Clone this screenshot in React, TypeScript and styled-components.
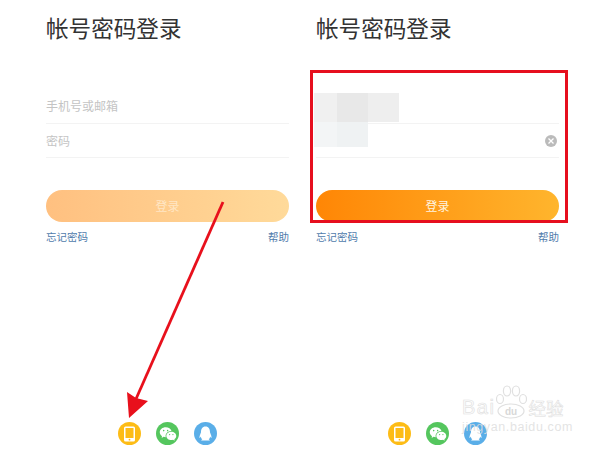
import React from 'react';
import styled, { createGlobalStyle } from 'styled-components';
import { RiQqFill, RiWechatFill } from 'react-icons/ri';

const GlobalStyle = createGlobalStyle`
  html, body {
    margin: 0;
    padding: 0;
    background: #fff;
  }
  body {
    font-family: "Noto Sans CJK SC", "Liberation Sans", sans-serif;
    overflow: hidden;
  }
`;

const Page = styled.div`
  position: relative;
  display: flex;
  gap: 27px;
  width: 600px;
  height: 450px;
  padding-left: 46px;
  box-sizing: border-box;
  overflow: hidden;
`;

const Panel = styled.section`
  display: flex;
  flex-direction: column;
  width: 243px;
  height: 100%;
`;

const Title = styled.h1`
  margin: 14px 0 0;
  font-size: 22.6px;
  line-height: 28px;
  font-weight: 400;
  color: #333;
`;

const Form = styled.div`
  margin-top: 47px;
`;

const Field = styled.div`
  display: flex;
  align-items: center;
  justify-content: space-between;
  height: 34px;
  border-bottom: 1px solid #f3f3f3;
  box-sizing: border-box;
  &:first-child {
    height: 35px;
    padding-bottom: 1px;
  }
`;

const Placeholder = styled.span`
  font-size: 12px;
  color: #c4c4c4;
`;

const Mosaic = styled.div<{ $top: number }>`
  display: flex;
  align-self: flex-start;
  margin: ${(p) => p.$top}px 0 0 -2px;
`;

const Tile = styled.div<{ $w: number; $h: number; $c: string }>`
  width: ${(p) => p.$w}px;
  height: ${(p) => p.$h}px;
  background: ${(p) => p.$c};
`;

const Clear = styled.span`
  display: flex;
  align-items: center;
  justify-content: center;
  width: 12px;
  height: 12px;
  margin-right: 2px;
  border-radius: 50%;
  background: #bbb;
`;

const Submit = styled.div<{ $active?: boolean }>`
  display: flex;
  align-items: center;
  justify-content: center;
  height: 32px;
  margin-top: 32px;
  padding-bottom: 2px;
  box-sizing: border-box;
  border-radius: 16px;
  font-size: 12px;
  color: ${(p) => (p.$active ? '#fff3df' : '#ffe6c4')};
  background: ${(p) =>
    p.$active
      ? 'linear-gradient(90deg, #ff8605, #ffb52d)'
      : 'linear-gradient(90deg, #ffc080, #ffda9a)'};
`;

const Links = styled.div`
  display: flex;
  justify-content: space-between;
  margin-top: 7px;
  font-size: 10.5px;
  line-height: 15px;
  color: #4f7bab;
`;

const Socials = styled.div`
  display: flex;
  justify-content: center;
  gap: 15px;
  margin-top: auto;
  margin-bottom: 5px;
`;

const Social = styled.div<{ $c: string }>`
  display: flex;
  align-items: center;
  justify-content: center;
  width: 23px;
  height: 23px;
  border-radius: 50%;
  color: #fff;
  background: ${(p) => p.$c};
`;

const Highlight = styled.div`
  position: absolute;
  left: 310px;
  top: 70px;
  width: 258px;
  height: 153px;
  border: 3px solid #e60f1e;
  box-sizing: border-box;
`;

const ArrowLayer = styled.svg`
  position: absolute;
  left: 0;
  top: 0;
`;

const Watermark = styled.div`
  position: absolute;
  left: 462px;
  top: 384px;
  width: 106px;
  pointer-events: none;
`;

const MarkRow = styled.div`
  display: flex;
  align-items: flex-end;
  height: 35px;
`;

const MarkBrand = styled.span`
  font-family: "Liberation Sans", sans-serif;
  font-size: 20px;
  line-height: 23px;
  letter-spacing: 1.5px;
  color: rgba(255, 255, 255, 0.6);
  -webkit-text-stroke: 0.7px #e2e2e2;
`;

const MarkName = styled.span`
  margin-left: 1px;
  font-size: 17.5px;
  line-height: 23px;
  color: rgba(255, 255, 255, 0.6);
  -webkit-text-stroke: 0.5px #dcdcdc;
`;

const MarkUrl = styled.div`
  margin-top: 1px;
  font-family: "Liberation Sans", sans-serif;
  font-size: 12.5px;
  line-height: 15px;
  letter-spacing: 0.6px;
  color: rgba(222, 222, 222, 0.85);
  white-space: nowrap;
`;

const PawLabel = styled.text`
  font-family: "Liberation Sans", sans-serif;
  font-size: 10px;
  font-weight: 700;
`;

const PhoneIcon: React.FC = () => (
  <svg width="13" height="16" viewBox="0 0 13 16">
    <rect x="1" y="0.5" width="11" height="15" rx="1.5" fill="#fff" />
    <rect x="2.5" y="2" width="8" height="10" fill="#fdbc16" />
    <circle cx="6.5" cy="13.7" r="0.9" fill="#fdbc16" />
  </svg>
);

const Paw: React.FC = () => (
  <svg width="32" height="35" viewBox="0 0 32 35" fill="rgba(255,255,255,0.6)" stroke="#e0e0e0" strokeWidth="1.2">
    <ellipse cx="5" cy="15" rx="3.5" ry="4.5" />
    <ellipse cx="12" cy="7" rx="3.6" ry="5" />
    <ellipse cx="21" cy="7" rx="3.6" ry="5" />
    <ellipse cx="28" cy="15" rx="3.5" ry="4.5" />
    <ellipse cx="16" cy="27" rx="13" ry="7" />
    <PawLabel x="16" y="31" textAnchor="middle" fill="#d8d8d8" stroke="none">du</PawLabel>
  </svg>
);

const LoginForm: React.FC<{ filled?: boolean }> = ({ filled }) => (
  <Panel>
    <Title>帐号密码登录</Title>
    <Form>
      <Field>
        {filled ? (
          <Mosaic $top={4}>
            <Tile $w={23} $h={29} $c="#f0f0f0" />
            <Tile $w={31} $h={29} $c="#e8e8e8" />
            <Tile $w={31} $h={29} $c="#eeeeee" />
          </Mosaic>
        ) : (
          <Placeholder>手机号或邮箱</Placeholder>
        )}
      </Field>
      <Field>
        {filled ? (
          <>
            <Mosaic $top={-2}>
              <Tile $w={23} $h={25} $c="#f3f5f6" />
              <Tile $w={31} $h={25} $c="#eff2f3" />
            </Mosaic>
            <Clear>
              <svg width="8" height="8" viewBox="0 0 8 8" stroke="#fff" strokeWidth="1.3">
                <path d="M1.5 1.5l5 5M6.5 1.5l-5 5" />
              </svg>
            </Clear>
          </>
        ) : (
          <Placeholder>密码</Placeholder>
        )}
      </Field>
    </Form>
    <Submit $active={filled}>登录</Submit>
    <Links>
      <span>忘记密码</span>
      <span>帮助</span>
    </Links>
    <Socials>
      <Social $c="#fdbc16"><PhoneIcon /></Social>
      <Social $c="#55c65e"><RiWechatFill size={18} /></Social>
      <Social $c="#5aaee8"><RiQqFill size={17} /></Social>
    </Socials>
  </Panel>
);

const App: React.FC = () => (
  <>
    <GlobalStyle />
    <Page>
      <LoginForm />
      <LoginForm filled />
      <Highlight />
      <ArrowLayer width="600" height="450" viewBox="0 0 600 450">
        <line x1="223" y1="202" x2="136" y2="399" stroke="#e8101c" strokeWidth="2.8" />
        <polygon points="129,418 127,392 136,398 148,401" fill="#e8101c" />
      </ArrowLayer>
      <Watermark>
        <MarkRow>
          <MarkBrand>Bai</MarkBrand>
          <Paw />
          <MarkName>经验</MarkName>
        </MarkRow>
        <MarkUrl>jingyan.baidu.com</MarkUrl>
      </Watermark>
    </Page>
  </>
);

export default App;
